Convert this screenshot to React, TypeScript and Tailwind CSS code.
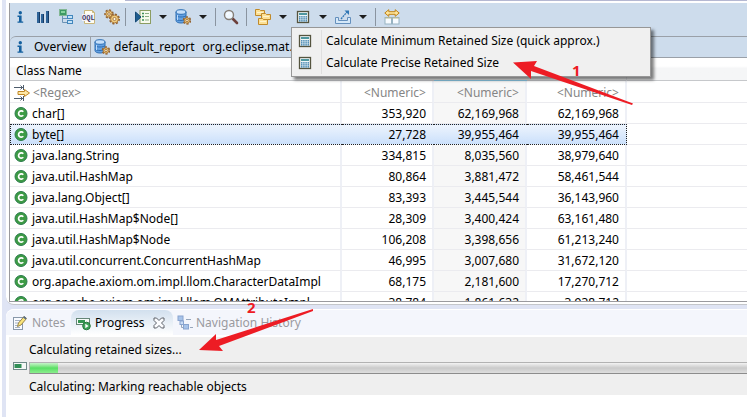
import type { ReactNode } from 'react';

interface HistogramRow {
  name: string;
  objects: string;
  shallow: string;
  retained: string;
}

const ROWS: HistogramRow[] = [
  { name: 'char[]', objects: '353,920', shallow: '62,169,968', retained: '62,169,968' },
  { name: 'byte[]', objects: '27,728', shallow: '39,955,464', retained: '39,955,464' },
  { name: 'java.lang.String', objects: '334,815', shallow: '8,035,560', retained: '38,979,640' },
  { name: 'java.util.HashMap', objects: '80,864', shallow: '3,881,472', retained: '58,461,544' },
  { name: 'java.lang.Object[]', objects: '83,393', shallow: '3,445,544', retained: '36,143,960' },
  { name: 'java.util.HashMap$Node[]', objects: '28,309', shallow: '3,400,424', retained: '63,161,480' },
  { name: 'java.util.HashMap$Node', objects: '106,208', shallow: '3,398,656', retained: '61,213,240' },
  { name: 'java.util.concurrent.ConcurrentHashMap', objects: '46,995', shallow: '3,007,680', retained: '31,672,120' },
  { name: 'org.apache.axiom.om.impl.llom.CharacterDataImpl', objects: '68,175', shallow: '2,181,600', retained: '17,270,712' },
  { name: 'org.apache.axiom.om.impl.llom.OMAttributeImpl', objects: '38,784', shallow: '1,861,632', retained: '3,938,712' },
];

const SELECTED = 'byte[]';

function Icon({ children, w = 16, h = 16 }: { children: ReactNode; w?: number; h?: number }) {
  return (
    <svg width={w} height={h} viewBox={`0 0 ${w} ${h}`} className="shrink-0" aria-hidden="true">
      {children}
    </svg>
  );
}

function InfoIcon() {
  return (
    <Icon>
      <circle cx="8.3" cy="3.8" r="1.7" fill="#14609f" />
      <path d="M5.5 6.5H9.6V12.4H11.2V13.8H5.5V12.4H7V7.9H5.5Z" fill="#14609f" />
    </Icon>
  );
}

function HistogramIcon() {
  return (
    <Icon>
      <path d="M2 3h3v11H2zM6 5h3v9H6zM11 2h3v12h-3z" fill="#2f6499" />
      <path d="M4.5 3v11M8.5 5v9M13.5 2v12" stroke="#163b66" />
    </Icon>
  );
}

function TreeIcon() {
  return (
    <Icon>
      <path d="M4.5 7v6.5H9M4.5 9.5H9" stroke="#6c93b5" fill="none" />
      <rect x="1.5" y="0.5" width="7" height="6" fill="#3f9a63" stroke="#82b794" />
      <rect x="3" y="2" width="4" height="2" fill="#86d29c" />
      <rect x="9.5" y="6.5" width="5" height="3" fill="#c5e2f7" stroke="#4387bd" />
      <rect x="9.5" y="11.5" width="5" height="3" fill="#c5e2f7" stroke="#4387bd" />
    </Icon>
  );
}

function OqlIcon() {
  return (
    <Icon>
      <path d="M3.5 1.5h8l2 2v11h-10z" fill="#fffdf3" stroke="#c9b77c" />
      <path d="M11.5 1.5v2h2" fill="none" stroke="#c9b77c" />
      <rect x="1" y="5" width="12" height="7" fill="#f3f1f5" />
      <text x="1" y="11" fontSize="7" fontWeight="700" fill="#41396b" fontFamily="Liberation Mono, monospace">
        OQL
      </text>
    </Icon>
  );
}

function Gear({ x, y, r }: { x: number; y: number; r: number }) {
  return (
    <g>
      <circle cx={x} cy={y} r={r} fill="none" stroke="#936332" strokeWidth="2" strokeDasharray="2 1.5" />
      <circle cx={x} cy={y} r={r - 0.6} fill="#f2cf80" stroke="#a87537" strokeWidth="0.9" />
      <circle cx={x} cy={y} r={r * 0.35} fill="#fff8e6" stroke="#936332" strokeWidth="0.8" />
    </g>
  );
}

function GearsIcon() {
  return (
    <Icon>
      <Gear x={5} y={5} r={3.8} />
      <Gear x={10.5} y={10} r={4.5} />
    </Icon>
  );
}

function ReportIcon() {
  return (
    <Icon>
      <rect x="5" y="1.5" width="10.5" height="13" fill="#f7faee" stroke="#8c9d62" />
      <path d="M7 4.5h2M7 7.5h2M7 11h2" stroke="#3e8f58" strokeWidth="1.5" />
      <path d="M10 4.5h4M10 7.5h4M10 11h4" stroke="#8bad83" />
      <path d="M0.5 3v10L6 8z" fill="#1e5d90" stroke="#174b76" />
    </Icon>
  );
}

function DatabaseIcon() {
  return (
    <Icon>
      <path d="M1 3v8.5c0 1.5 2 2.5 5 2.5s5-1 5-2.5V3z" fill="#64a1e2" stroke="#2d6eb3" />
      <ellipse cx="6" cy="3" rx="5" ry="2.3" fill="#c6e0fb" stroke="#2d6eb3" />
      <path d="M1 6.5c1 2 9 2 10 0M1 10c1 2 9 2 10 0" fill="none" stroke="#2d6eb3" />
      <path d="M2.5 6v5" stroke="#bcdafa" />
      <Gear x={12} y={11.5} r={3.3} />
    </Icon>
  );
}

function SearchIcon() {
  return (
    <Icon>
      <path d="M10 10l4 4" stroke="#6d403c" strokeWidth="2.6" strokeLinecap="round" />
      <circle cx="6" cy="6" r="4.5" fill="#f0f8ff" stroke="#857e77" strokeWidth="1.4" />
      <path d="M4 6a2.5 2.5 0 0 1 2.3-2.3" stroke="#fff" fill="none" />
    </Icon>
  );
}

function FoldersIcon() {
  return (
    <Icon>
      <g fill="#fce094" stroke="#c08a2b">
        <path d="M0.5 0.5h4l1 1h4v5h-9z" />
        <path d="M6.5 4.5h4l1 1h4v5h-9z" />
        <path d="M3.5 9.5h4l1 1h4v5h-9z" />
      </g>
      <path d="M2 3.5h6M8 7.5h6M5 12.5h6" stroke="#fff4cd" />
    </Icon>
  );
}

function CalculatorIcon() {
  return (
    <Icon>
      <rect x="2.5" y="2.5" width="11" height="11" fill="#eef6f8" stroke="#55543f" strokeWidth="1.3" />
      <rect x="4" y="4" width="8" height="2" fill="#4f979f" />
      <path d="M4 7.8h8M4 9.8h8M4 11.8h8" stroke="#2470a3" strokeWidth="1.3" strokeDasharray="1.5 0.67" />
    </Icon>
  );
}

function ExportIcon() {
  return (
    <Icon>
      <path d="M0.5 8.5h3v3h9v-3h3v6h-15z" fill="#d5e8f8" stroke="#6590bd" />
      <path d="M6 10l6-7" stroke="#2f76b4" strokeWidth="1.3" strokeDasharray="2 0.7" />
      <path d="M9.5 1.5h4.5v4.5z" fill="#2f76b4" />
    </Icon>
  );
}

function CompareIcon() {
  return (
    <Icon>
      <path d="M0.8 4l4-3.3v2h6.4v-2l4 3.3-4 3.3v-2H4.8v2z" fill="#ffe59a" stroke="#bf8316" />
      <rect x="1" y="8.5" width="6.5" height="6.5" fill="#f7fbff" stroke="#98b3c2" />
      <rect x="8.5" y="8.5" width="6.5" height="6.5" fill="#f7fbff" stroke="#98b3c2" />
      <path d="M1 9h6.500M8.500 9H15" stroke="#c0bd8e" />
    </Icon>
  );
}

function ClassIcon() {
  return (
    <Icon w={14} h={14}>
      <circle cx="7" cy="6.5" r="6" fill="#3d9b45" stroke="#2b7c4c" />
      <path d="M9.3 4.7A2.7 2.7 0 1 0 9.3 8.3" fill="none" stroke="#fff" strokeWidth="1.7" />
    </Icon>
  );
}

function RegexIcon() {
  return (
    <Icon>
      <path
        d="M0 2.5h9M0 13.5h9M9.5 0v5M9.5 11v5M6.5 0.5l2 2-2 2M6.5 11.5l2 2-2 2"
        stroke="#4e5c6c"
        fill="none"
      />
      <path d="M4 6.5h6.5v-2L15.5 8l-5 3.5v-2H4z" fill="#ffe8a6" stroke="#c08726" />
    </Icon>
  );
}

function NotesIcon() {
  return (
    <Icon>
      <rect x="1.5" y="2.5" width="9" height="12" fill="#f9fbff" stroke="#8998aa" />
      <path d="M3 5.5h5M3 8h4M3 10.5h3M3 12.5h5" stroke="#a5b1c2" />
      <path d="M5.5 11.5l1-3.5L12 1.5l2.5 2L9 10z" fill="#fae57b" stroke="#98834c" />
      <path d="M11 2.5L12 1l2.5 2-1 1.5z" fill="#566d88" />
    </Icon>
  );
}

function ProgressIcon() {
  return (
    <Icon>
      <rect x="0.5" y="3.5" width="13" height="6" fill="#f7fbf7" stroke="#668678" />
      <rect x="2" y="5" width="7" height="3" fill="#359553" />
      <circle cx="10.5" cy="11" r="3.8" fill="#3fa35a" stroke="#26763c" />
      <path d="M9.3 8.8v4.4l3.300-2.200z" fill="#fff" />
    </Icon>
  );
}

function NavigationIcon() {
  return (
    <Icon>
      <g opacity="0.65">
        <path d="M4.5 6v6.5H8M9 4.500h5M13 12.500h3" stroke="#687e9a" fill="none" />
        <rect x="1" y="1" width="5" height="4.5" fill="#7ea9e0" stroke="#5079b8" />
        <rect x="3" y="6" width="3.5" height="3.5" fill="#b5d1f3" stroke="#5079b8" />
        <rect x="6.5" y="9.5" width="5" height="4.5" fill="#7ea9e0" stroke="#5079b8" />
      </g>
    </Icon>
  );
}

function CloseIcon() {
  return (
    <Icon w={12} h={12}>
      <path
        d="M1 1h2.5L6 3.5 8.500 1H11v2.500L8.500 6 11 8.500V11H8.500L6 8.500 3.500 11H1V8.500L3.500 6 1 3.500z"
        fill="#fbfcfe"
        stroke="#5c6068"
      />
    </Icon>
  );
}

function ToolButton({ label, children }: { label: string; children: ReactNode }) {
  return (
    <button type="button" aria-label={label} className="block">
      {children}
    </button>
  );
}

function Caret({ label }: { label: string }) {
  return (
    <button type="button" aria-label={label} className="mx-1 flex w-4 justify-center">
      <svg width="8" height="4" viewBox="0 0 8 4" aria-hidden="true">
        <path d="M0 0h8L4 4z" fill="#1e1e1e" />
      </svg>
    </button>
  );
}

function Divider() {
  return <span className="h-[18px] w-px bg-[#8a94a0]" />;
}

function Toolbar() {
  return (
    <div className="flex h-[33px] shrink-0 items-center bg-[#cddcec] pb-[6px] pl-[2px]">
      <div className="flex items-center gap-[7px] pr-[5px]">
        <ToolButton label="Overview"><InfoIcon /></ToolButton>
        <ToolButton label="Histogram"><HistogramIcon /></ToolButton>
        <ToolButton label="Dominator Tree"><TreeIcon /></ToolButton>
        <ToolButton label="OQL"><OqlIcon /></ToolButton>
        <ToolButton label="Thread Overview"><GearsIcon /></ToolButton>
      </div>
      <Divider />
      <div className="flex items-center pl-[9px]">
        <ToolButton label="Run Report"><ReportIcon /></ToolButton>
        <Caret label="Report menu" />
        <ToolButton label="Query Browser"><DatabaseIcon /></ToolButton>
        <Caret label="Query menu" />
      </div>
      <Divider />
      <div className="px-[7px]">
        <ToolButton label="Find"><SearchIcon /></ToolButton>
      </div>
      <Divider />
      <div className="flex items-center pl-2">
        <ToolButton label="Group by"><FoldersIcon /></ToolButton>
        <Caret label="Group menu" />
        <ToolButton label="Calculate retained size"><CalculatorIcon /></ToolButton>
        <Caret label="Calculate menu" />
        <ToolButton label="Export"><ExportIcon /></ToolButton>
        <Caret label="Export menu" />
      </div>
      <Divider />
      <div className="pl-2">
        <ToolButton label="Compare"><CompareIcon /></ToolButton>
      </div>
    </div>
  );
}

function EditorTabs() {
  return (
    <div className="flex h-[22px] shrink-0 bg-[#cddcec]">
      <div role="tablist" className="flex flex-1 overflow-hidden rounded-tl-md border-y border-[#9aa0a8]">
        <button type="button" role="tab" className="flex w-[81px] shrink-0 items-center gap-[6px] border-r border-[#9aa0a8] pl-[2px]">
          <InfoIcon />
          Overview
        </button>
        <button type="button" role="tab" className="flex shrink-0 items-center gap-1 pl-[3px]">
          <DatabaseIcon />
          <span className="pr-1">default_report</span>
          <span>org.eclipse.mat.api</span>
        </button>
      </div>
    </div>
  );
}

const NAME_CELL = 'h-[21px] border-r-2 border-b border-b-[#ebebef] border-r-[#eef0f6] p-0 pt-[2px] pl-1';
const NUMBER_CELL = 'h-[21px] border-r-2 border-b border-b-[#ebebef] border-r-[#eef0f6] p-0 pt-[2px] pr-[6px] text-right';
const SELECTED_NAME = 'h-[21px] border-y border-l border-dotted border-[#222] bg-linear-to-b from-[#edf4fd] to-[#cbe0fb] p-0 pt-px pl-[3px]';
const SELECTED_NUMBER = 'h-[21px] border-y border-dotted border-[#222] bg-linear-to-b from-[#edf4fd] to-[#cbe0fb] p-0 pt-px pr-2 text-right';
const SELECTED_LAST = 'h-[21px] border-y border-r border-dotted border-[#222] bg-linear-to-b from-[#edf4fd] to-[#cbe0fb] p-0 pt-px pr-[7px] text-right';

function Histogram() {
  return (
    <div className="min-h-0 flex-1 overflow-hidden bg-white">
      <table className="w-full table-fixed border-separate border-spacing-0 whitespace-nowrap">
        <colgroup>
          <col className="w-[332px]" />
          <col className="w-[92px]" />
          <col className="w-[93px]" />
          <col className="w-[100px]" />
          <col />
        </colgroup>
        <thead>
          <tr className="bg-linear-to-b from-white from-35% to-[#f5f6f7] to-45%">
            <th className="h-[23px] border-b border-[#c6c8cb] p-0 pt-[3px] pl-[6px] text-left font-normal">Class Name</th>
            <th className="border-b border-[#c6c8cb] p-0 pr-[6px] text-right font-normal">Objects</th>
            <th className="border-b border-[#8ecbe9] p-0 pr-[6px] text-right font-normal">Shallow Heap</th>
            <th className="border-r border-b border-r-[#e3e5ea] border-b-[#c6c8cb] p-0 pr-[6px] text-right font-normal">Retained Heap</th>
            <th className="border-b border-[#c6c8cb] p-0" />
          </tr>
        </thead>
        <tbody>
          <tr className="h-[22px] text-[#858585]">
            <td className={NAME_CELL}>
              <span className="flex items-center gap-[3px]">
                <RegexIcon />
                &lt;Regex&gt;
              </span>
            </td>
            <td className={NUMBER_CELL}>&lt;Numeric&gt;</td>
            <td className={`${NUMBER_CELL} bg-[#f7f7f7]`}>&lt;Numeric&gt;</td>
            <td className={NUMBER_CELL}>&lt;Numeric&gt;</td>
            <td className="border-b border-[#ebebef] p-0" />
          </tr>
          {ROWS.map((row) => {
            const selected = row.name === SELECTED;
            return (
              <tr key={row.name} aria-selected={selected}>
                <td className={selected ? SELECTED_NAME : NAME_CELL}>
                  <span className="flex items-center gap-1">
                    <ClassIcon />
                    {row.name}
                  </span>
                </td>
                <td className={selected ? SELECTED_NUMBER : NUMBER_CELL}>{row.objects}</td>
                <td className={selected ? SELECTED_NUMBER : `${NUMBER_CELL} bg-[#f7f7f7]`}>{row.shallow}</td>
                <td className={selected ? SELECTED_LAST : NUMBER_CELL}>{row.retained}</td>
                <td className="border-b border-[#ebebef] p-0" />
              </tr>
            );
          })}
        </tbody>
      </table>
    </div>
  );
}

function CalculateMenu() {
  return (
    <div
      role="menu"
      className="absolute top-[27px] left-[291px] flex w-[360px] flex-col border border-[#979797] bg-[#f0f0f0] py-[2px] shadow-[3px_3px_3px_rgba(0,0,0,0.5)]"
    >
      {['Calculate Minimum Retained Size (quick approx.)', 'Calculate Precise Retained Size'].map((item) => (
        <button key={item} type="button" role="menuitem" className="flex h-[22px] items-center">
          <span className="flex h-full w-[30px] items-center border-r border-[#dfdfdf] pl-[5px]">
            <CalculatorIcon />
          </span>
          <span className="pl-1">{item}</span>
        </button>
      ))}
    </div>
  );
}

function ProgressView() {
  return (
    <section className="flex h-[108px] shrink-0 flex-col rounded-tl-lg bg-white">
      <div role="tablist" className="flex h-[26px] shrink-0 rounded-tl-lg border-t border-white bg-[#f4f6fc] text-[#9a9a9f]">
        <button type="button" role="tab" className="flex w-[65px] items-center gap-1 pt-px pl-[6px]">
          <NotesIcon />
          Notes
        </button>
        <div className="flex w-[102px] items-center rounded-t-lg bg-linear-to-b from-[#d2e0ee] to-white pt-px pl-[5px] text-black">
          <button type="button" role="tab" aria-selected="true" className="flex w-[77px] items-center gap-[3px]">
            <ProgressIcon />
            Progress
          </button>
          <button type="button" aria-label="Close Progress">
            <CloseIcon />
          </button>
        </div>
        <button type="button" role="tab" className="flex items-center gap-[3px] pt-px pl-1">
          <NavigationIcon />
          Navigation History
        </button>
      </div>
      <div className="mt-[2px] ml-[3px] flex h-[58px] shrink-0 flex-col bg-[#efefef]">
        <p className="flex h-[25px] items-center pl-5">Calculating retained sizes...</p>
        <div className="flex h-3 items-start">
          <span className="w-5 pl-1">
            <svg width="14" height="8" viewBox="0 0 14 8" className="block" aria-hidden="true">
              <rect x="0.5" y="0.5" width="13" height="7" fill="#f5f8f6" stroke="#708a88" />
              <rect x="1.5" y="2" width="7" height="4" fill="#318e55" />
            </svg>
          </span>
          <div
            role="progressbar"
            aria-label="Calculating retained sizes"
            className="h-3 flex-1 border border-r-0 border-t-[#b2b2b2] border-b-[#8c8c8c] border-l-[#b2b2b2] bg-linear-to-b from-[#f3f3f3] via-[#cacaca] to-[#dedede]"
          >
            <div className="h-full w-7 bg-linear-to-b from-[#c5f3c9] via-[#58df64] to-[#8aee8d]" />
          </div>
        </div>
        <p className="flex h-[21px] items-center pt-1 pl-5">Calculating: Marking reachable objects</p>
      </div>
    </section>
  );
}

function Annotations() {
  return (
    <div className="pointer-events-none absolute inset-0 overflow-hidden font-['Noto_Sans',sans-serif] text-[15px] leading-4 font-bold text-[#ed1c24]">
      <svg width="747" height="417" viewBox="0 0 747 417" className="absolute top-0 left-0" aria-hidden="true">
        <path d="M513 62.5L537 61L534 66L633 103.5L632 105L531 71L531 79Z" fill="#ed1c24" />
        <path d="M199 350L216 334L216 340L313 309L313 311L219 346L223 351Z" fill="#ed1c24" />
      </svg>
      <span className="absolute top-[62px] left-[572px]">1</span>
      <span className="absolute top-[299px] left-[247px]">2</span>
    </div>
  );
}

export default function App() {
  return (
    <div className="relative flex h-screen flex-col overflow-hidden border-l-2 border-white bg-[#dfe4f4] pl-1 font-['Noto_Sans','Noto_Sans_CJK_SC',sans-serif] text-[12px] leading-4 text-black">
      <main className="flex min-h-0 flex-1 flex-col rounded-bl-lg border-b border-[#c4c6ca] bg-white pb-[2px] pl-[3px]">
        <div className="flex h-[3px] shrink-0">
          <span className="ml-[116px] h-px flex-1 bg-[#b5b8d2]" />
        </div>
        <div className="flex min-h-0 flex-1 flex-col border-b border-l border-[#9a9a9e]">
          <Toolbar />
          <EditorTabs />
          <Histogram />
        </div>
      </main>
      <div className="h-1 shrink-0" />
      <ProgressView />
      <div className="absolute inset-y-0 -left-[2px] w-full">
        <CalculateMenu />
        <Annotations />
      </div>
    </div>
  );
}
